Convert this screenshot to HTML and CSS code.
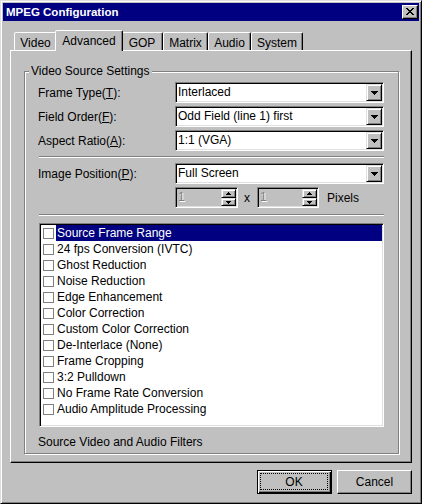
FILE: index.html
```html
<!DOCTYPE html>
<html>
<head>
<meta charset="utf-8">
<title>MPEG Configuration</title>
<link rel="stylesheet" href="styles.css">
</head>
<body>
<div class="window">
  <div class="titlebar">
    <span class="title">MPEG Configuration</span>
    <span class="close-btn"><svg width="8" height="7" viewBox="0 0 8 7" shape-rendering="crispEdges"><path fill="#000" d="M0 0h2v1h-2z M6 0h2v1h-2z M1 1h2v1h-2z M5 1h2v1h-2z M2 2h4v1h-4z M3 3h2v1h-2z M2 4h4v1h-4z M1 5h2v1h-2z M5 5h2v1h-2z M0 6h2v1h-2z M6 6h2v1h-2z"/></svg></span>
  </div>

  <div class="tabs">
    <div class="tab tab-video">Video</div>
    <div class="tab tab-adv active">Advanced</div>
    <div class="tab tab-gop">GOP</div>
    <div class="tab tab-matrix">Matrix</div>
    <div class="tab tab-audio">Audio</div>
    <div class="tab tab-system">System</div>
  </div>

  <div class="page">
    <div class="group">
      <div class="legend">Video Source Settings</div>

      <div class="row">
        <span class="lbl">Frame Type(<u>T</u>):</span>
        <div class="combo">
          <span class="combo-text">Interlaced</span>
          <span class="drop"><svg width="7" height="4" viewBox="0 0 7 4" shape-rendering="crispEdges"><path fill="#000" d="M0 0h7v1h-7z M1 1h5v1h-5z M2 2h3v1h-3z M3 3h1v1h-1z"/></svg></span>
        </div>
      </div>
      <div class="row">
        <span class="lbl">Field Order(<u>F</u>):</span>
        <div class="combo">
          <span class="combo-text">Odd Field (line 1) first</span>
          <span class="drop"><svg width="7" height="4" viewBox="0 0 7 4" shape-rendering="crispEdges"><path fill="#000" d="M0 0h7v1h-7z M1 1h5v1h-5z M2 2h3v1h-3z M3 3h1v1h-1z"/></svg></span>
        </div>
      </div>
      <div class="row">
        <span class="lbl">Aspect Ratio(<u>A</u>):</span>
        <div class="combo">
          <span class="combo-text">1:1 (VGA)</span>
          <span class="drop"><svg width="7" height="4" viewBox="0 0 7 4" shape-rendering="crispEdges"><path fill="#000" d="M0 0h7v1h-7z M1 1h5v1h-5z M2 2h3v1h-3z M3 3h1v1h-1z"/></svg></span>
        </div>
      </div>

      <div class="sep sep-1"></div>

      <div class="row">
        <span class="lbl">Image Position(<u>P</u>):</span>
        <div class="combo">
          <span class="combo-text">Full Screen</span>
          <span class="drop"><svg width="7" height="4" viewBox="0 0 7 4" shape-rendering="crispEdges"><path fill="#000" d="M0 0h7v1h-7z M1 1h5v1h-5z M2 2h3v1h-3z M3 3h1v1h-1z"/></svg></span>
        </div>
      </div>

      <div class="spinrow">
        <div class="spin spin-1">
          <span class="spin-val">1</span>
          <span class="spin-btns">
            <span class="sb sb-up"><svg width="5" height="3" viewBox="0 0 5 3" shape-rendering="crispEdges"><path fill="#000" d="M2 0h1v1h-1z M1 1h3v1h-3z M0 2h5v1h-5z"/></svg></span>
            <span class="sb sb-down"><svg width="5" height="3" viewBox="0 0 5 3" shape-rendering="crispEdges"><path fill="#000" d="M0 0h5v1h-5z M1 1h3v1h-3z M2 2h1v1h-1z"/></svg></span>
          </span>
        </div>
        <span class="times">x</span>
        <div class="spin spin-2">
          <span class="spin-val">1</span>
          <span class="spin-btns">
            <span class="sb sb-up"><svg width="5" height="3" viewBox="0 0 5 3" shape-rendering="crispEdges"><path fill="#000" d="M2 0h1v1h-1z M1 1h3v1h-3z M0 2h5v1h-5z"/></svg></span>
            <span class="sb sb-down"><svg width="5" height="3" viewBox="0 0 5 3" shape-rendering="crispEdges"><path fill="#000" d="M0 0h5v1h-5z M1 1h3v1h-3z M2 2h1v1h-1z"/></svg></span>
          </span>
        </div>
        <span class="pixels">Pixels</span>
      </div>

      <div class="sep sep-2"></div>

      <div class="list">
        <div class="item sel"><span class="cb"></span><span class="itxt">Source Frame Range</span></div>
        <div class="item"><span class="cb"></span><span class="itxt">24 fps Conversion (IVTC)</span></div>
        <div class="item"><span class="cb"></span><span class="itxt">Ghost Reduction</span></div>
        <div class="item"><span class="cb"></span><span class="itxt">Noise Reduction</span></div>
        <div class="item"><span class="cb"></span><span class="itxt">Edge Enhancement</span></div>
        <div class="item"><span class="cb"></span><span class="itxt">Color Correction</span></div>
        <div class="item"><span class="cb"></span><span class="itxt">Custom Color Correction</span></div>
        <div class="item"><span class="cb"></span><span class="itxt">De-Interlace (None)</span></div>
        <div class="item"><span class="cb"></span><span class="itxt">Frame Cropping</span></div>
        <div class="item"><span class="cb"></span><span class="itxt">3:2 Pulldown</span></div>
        <div class="item"><span class="cb"></span><span class="itxt">No Frame Rate Conversion</span></div>
        <div class="item"><span class="cb"></span><span class="itxt">Audio Amplitude Processing</span></div>
      </div>

      <div class="foot">Source Video and Audio Filters</div>
    </div>
  </div>

  <div class="buttons">
    <div class="btn btn-default"><span class="focus">OK</span></div>
    <div class="btn">Cancel</div>
  </div>
</div>
</body>
</html>
```

FILE: styles.css
```css
* { box-sizing: border-box; }

html, body {
  margin: 0;
  padding: 0;
}

body {
  background: #c0c0c0;
  font-family: "Liberation Sans", Arial, sans-serif;
  font-size: 12px;
  color: #000;
}

.window {
  width: 422px;
  height: 504px;
  background: #c0c0c0;
  border: 1px solid;
  border-color: #dfdfdf #000 #000 #dfdfdf;
  box-shadow: inset 1px 1px #fff, inset -1px -1px #808080;
  padding: 2px;
  display: flex;
  flex-direction: column;
}

/* title bar */
.titlebar {
  height: 18px;
  background: #000080;
  display: flex;
  align-items: center;
  justify-content: space-between;
  padding-left: 3px;
  padding-right: 1px;
  flex-shrink: 0;
}

.title {
  color: #fff;
  font-weight: bold;
  font-size: 11.5px;
  line-height: 14px;
}

.close-btn {
  width: 16px;
  height: 14px;
  background: #c0c0c0;
  border: 1px solid;
  border-color: #fff #000 #000 #fff;
  box-shadow: inset -1px -1px #808080;
  display: flex;
  align-items: center;
  justify-content: center;
  padding: 0 1px 1px 0;
}

.close-btn svg { display: block; }

/* tabs */
.tabs {
  display: flex;
  align-items: flex-end;
  height: 20px;
  margin-top: 9px;
  padding-left: 11px;
  flex-shrink: 0;
}

.tab {
  height: 18px;
  border: 1px solid;
  border-bottom: none;
  border-color: #fff #000 transparent #fff;
  border-radius: 2px 2px 0 0;
  box-shadow: inset -1px 0 #808080;
  display: flex;
  align-items: center;
  justify-content: center;
  line-height: 14px;
  padding-top: 2px;
  background: #c0c0c0;
}

.tab.active {
  height: 21px;
  margin: 0 -2px -1px -2px;
  position: relative;
  z-index: 1;
  padding-top: 0;
  padding-bottom: 1px;
}

.tab-video { width: 43px; }
.tab-adv { width: 68px; }
.tab-gop { width: 42px; }
.tab-matrix { width: 45px; }
.tab-audio { width: 43px; }
.tab-system { width: 52px; }

/* page */
.page {
  margin-left: 7px;
  width: 402px;
  height: 413px;
  flex-shrink: 0;
  border: 1px solid;
  border-color: #fff #000 #000 #fff;
  box-shadow: inset -1px -1px #808080;
  padding: 20px 0 0 13px;
}

.group {
  width: 375px;
  border: 1px solid #808080;
  box-shadow: inset 1px 1px #fff, 1px 1px #fff;
  padding: 0 14px 3px 13px;
}

.legend {
  width: max-content;
  margin: -8px 0 4px -9px;
  padding: 0 2px;
  background: #c0c0c0;
  line-height: 14px;
}

.row {
  display: flex;
  align-items: center;
  height: 21px;
  margin-bottom: 3px;
}

.lbl {
  width: 137px;
  line-height: 14px;
  flex-shrink: 0;
}

.combo {
  width: 209px;
  height: 21px;
  background: #fff;
  border: 1px solid;
  border-color: #808080 #fff #fff #808080;
  box-shadow: inset 1px 1px #000, inset -1px -1px #dfdfdf;
  padding: 1px;
  display: flex;
  align-items: stretch;
}

.combo-text {
  flex: 1;
  line-height: 17px;
  padding-left: 1px;
  white-space: nowrap;
  overflow: hidden;
}

.drop, .sb {
  background: #c0c0c0;
  border: 1px solid;
  border-color: #dfdfdf #000 #000 #dfdfdf;
  box-shadow: inset 1px 1px #fff, inset -1px -1px #808080;
  display: flex;
  align-items: center;
  justify-content: center;
}

.drop {
  width: 16px;
  height: 17px;
  flex-shrink: 0;
}

.drop svg, .sb svg { display: block; }

.sep {
  height: 2px;
  border-top: 1px solid #808080;
  border-bottom: 1px solid #fff;
  margin-left: 1px;
}

.sep-1 { margin-top: 5px; margin-bottom: 5px; }
.sep-2 { margin-top: 6px; }

.spinrow {
  display: flex;
  align-items: center;
  height: 21px;
  padding-left: 137px;
  margin-bottom: 3px;
}

.spin {
  height: 21px;
  background: #c0c0c0;
  border: 1px solid;
  border-color: #808080 #fff #fff #808080;
  box-shadow: inset 1px 1px #000, inset -1px -1px #dfdfdf;
  padding: 1px;
  display: flex;
  align-items: stretch;
}

.spin-1 { width: 63px; }
.spin-2 { width: 62px; }

.spin-val {
  flex: 1;
  line-height: 17px;
  padding-left: 1px;
  color: #808080;
  text-shadow: 1px 1px #fff;
}

.spin-btns {
  width: 15px;
  display: flex;
  flex-direction: column;
}

.sb-up { height: 9px; }
.sb-down { height: 8px; }

.times {
  margin: 0 7px 0 6px;
  line-height: 14px;
}

.pixels {
  margin-left: 8px;
  line-height: 14px;
}

.list {
  margin: 7px 0 0 1px;
  width: 345px;
  height: 204px;
  background: #fff;
  border: 1px solid;
  border-color: #808080 #fff #fff #808080;
  box-shadow: inset 1px 1px #000, inset -1px -1px #dfdfdf;
  padding: 1px;
}

.item {
  display: flex;
  align-items: center;
  height: 16px;
}

.cb {
  width: 11px;
  height: 11px;
  border: 1px solid #808080;
  background: #fff;
  margin-left: 2px;
  flex-shrink: 0;
}

.itxt {
  flex: 1;
  margin-left: 2px;
  padding-left: 1px;
  height: 16px;
  line-height: 16px;
  white-space: nowrap;
}

.item.sel .itxt {
  background: #000080;
  color: #fff;
}

.foot {
  margin-top: 7px;
  line-height: 16px;
}

/* buttons */
.buttons {
  display: flex;
  justify-content: flex-end;
  gap: 5px;
  margin-top: 7px;
  padding-right: 7px;
}

.btn {
  width: 75px;
  height: 24px;
  background: #c0c0c0;
  border: 1px solid;
  border-color: #fff #000 #000 #fff;
  box-shadow: inset -1px -1px #808080;
  display: flex;
  align-items: center;
  justify-content: center;
  line-height: 14px;
}

.btn-default {
  border-color: #000;
  box-shadow: inset 1px 1px #fff, inset -1px -1px #000, inset -2px -2px #808080;
  padding: 2px 3px 3px 2px;
  align-items: stretch;
}

.focus {
  flex: 1;
  border: 1px dotted #000;
  display: flex;
  align-items: center;
  justify-content: center;
}
```
